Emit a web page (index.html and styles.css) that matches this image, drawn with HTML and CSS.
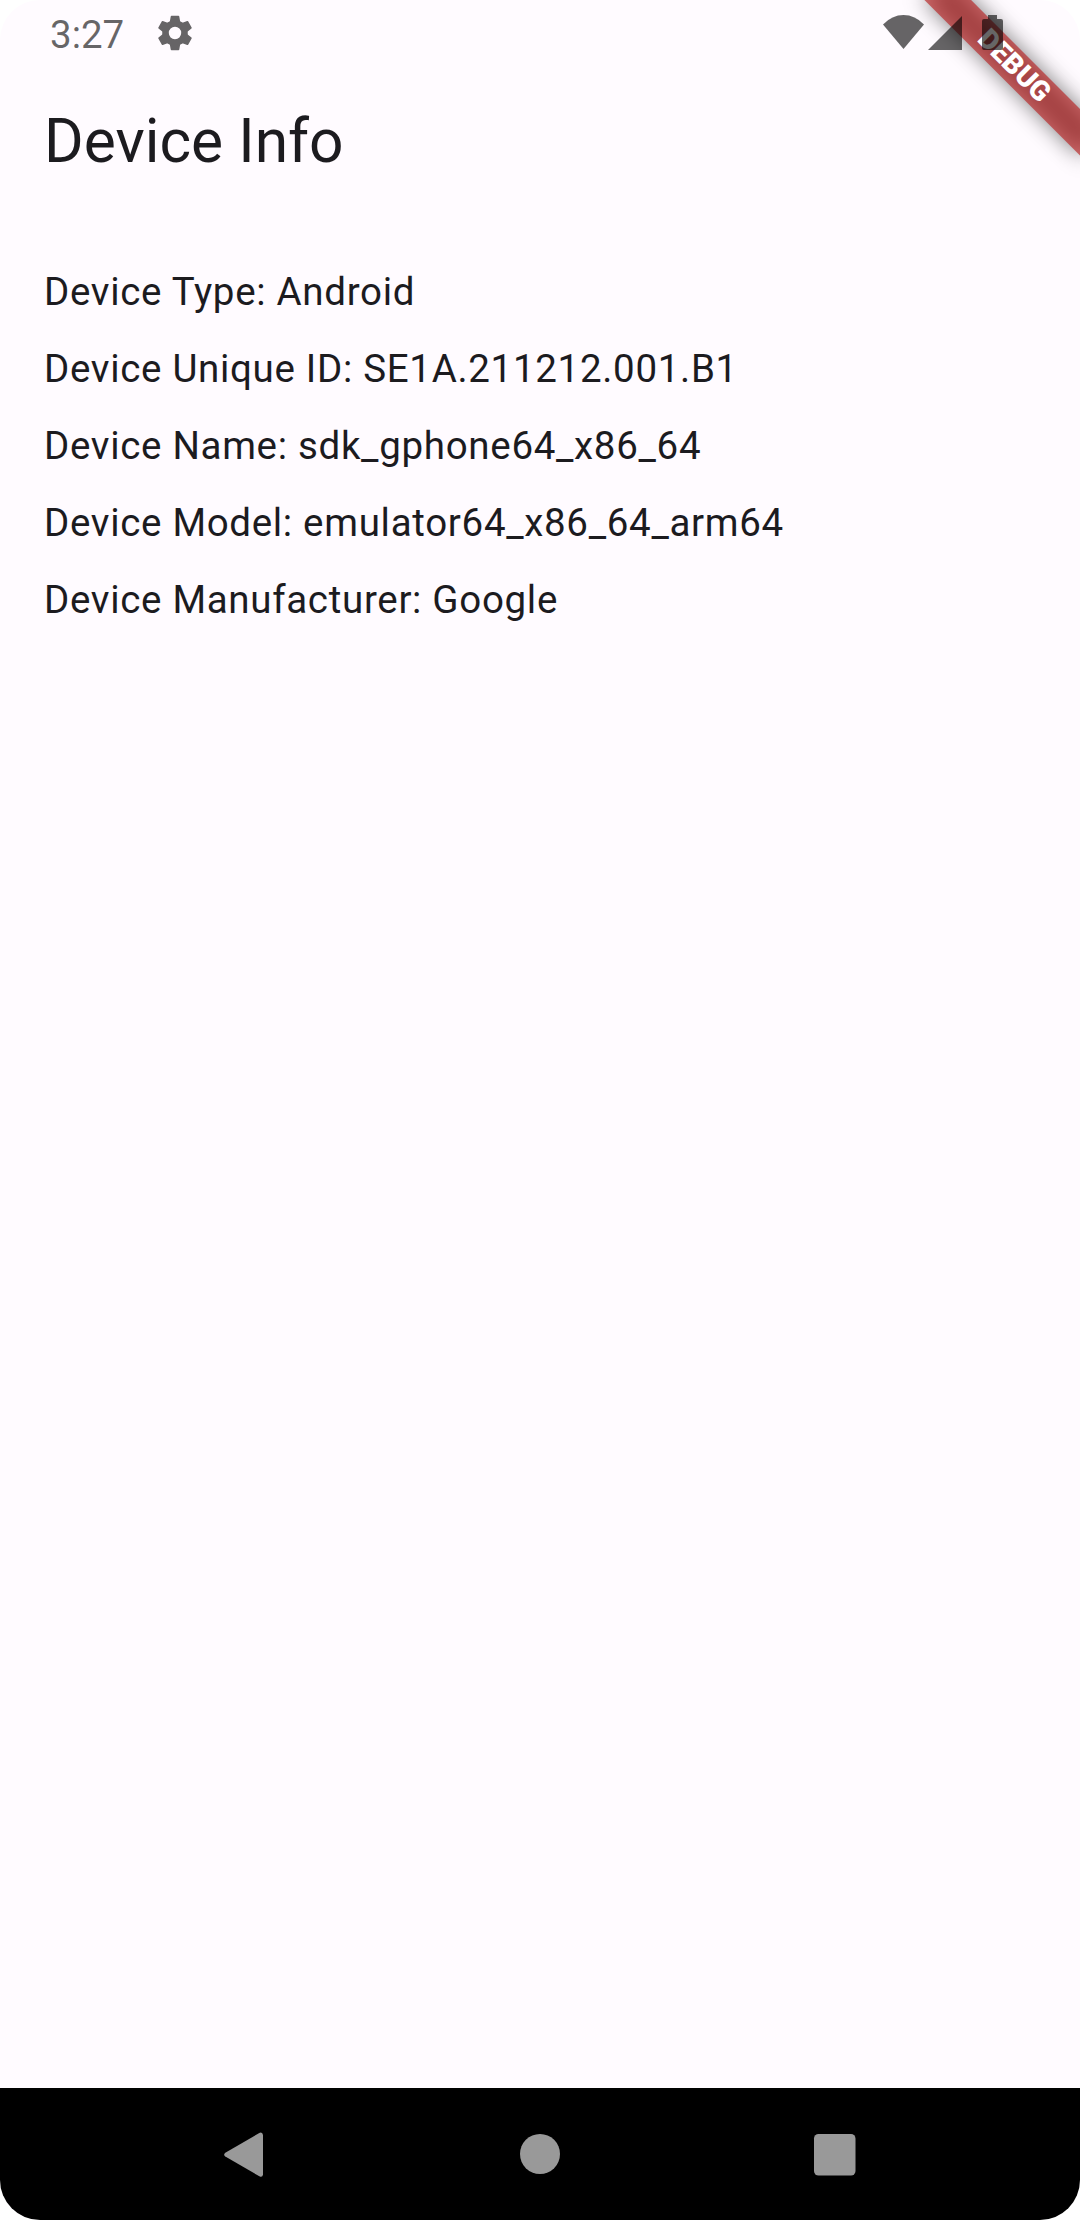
FILE: index.html
```html
<!DOCTYPE html>
<html lang="en">
<head>
<meta charset="utf-8">
<title>Device Info</title>
<link rel="stylesheet" href="styles.css">
</head>
<body>
<div class="screen">
  <div class="banner"><span class="banner-text">DEBUG</span></div>
  <div class="status-bar">
    <span class="clock">3:27</span>
    <svg class="gear" viewBox="-21 -21 42 42">
      <circle r="9.500" fill="none" stroke="#000" stroke-width="6.600"/>
      <g stroke="#000" stroke-width="1.600" stroke-linejoin="round">
        <path d="M-3.500-16.400H3.500L4.600-10L0-8.500L-4.600-10z"/>
        <path transform="rotate(60)" d="M-3.500-16.400H3.500L4.600-10L0-8.500L-4.600-10z"/>
        <path transform="rotate(120)" d="M-3.500-16.400H3.500L4.600-10L0-8.500L-4.600-10z"/>
        <path transform="rotate(180)" d="M-3.500-16.400H3.500L4.600-10L0-8.500L-4.600-10z"/>
        <path transform="rotate(240)" d="M-3.500-16.400H3.500L4.600-10L0-8.500L-4.600-10z"/>
        <path transform="rotate(300)" d="M-3.500-16.400H3.500L4.600-10L0-8.500L-4.600-10z"/>
      </g>
    </svg>
    <div class="indicators">
      <svg class="wifi" viewBox="0 0 41 34"><path d="M20.500 34L0 9.500Q9 0 20.500 0T41 9.500z"/></svg>
      <svg class="signal" viewBox="0 0 34 34"><path d="M34 0V34H0z"/></svg>
      <svg class="battery" viewBox="0 0 21 35"><path d="M6 0H15V4H19Q21 4 21 6V33Q21 35 19 35H2Q0 35 0 33V6Q0 4 2 4H6z"/></svg>
    </div>
  </div>
  <h1 class="title">Device Info</h1>
  <main class="details">
    <p>Device Type: Android</p>
    <p>Device Unique ID: SE1A.211212.001.B1</p>
    <p>Device Name: sdk_gphone64_x86_64</p>
    <p>Device Model: emulator64_x86_64_arm64</p>
    <p>Device Manufacturer: Google</p>
  </main>
  <nav class="nav-bar">
    <svg class="nav-icon" viewBox="0 0 48 48"><path d="M41 5V44.500Q40.500 47.500 37.800 46.500L3.300 26.500Q1 24.700 3.300 22.800L37.800 2.700Q40.500 1.700 41 5z"/></svg>
    <svg class="nav-icon" viewBox="0 0 48 48"><circle cx="24" cy="24" r="20"/></svg>
    <svg class="nav-icon" viewBox="0 0 48 48"><rect x="4" y="4" width="41.500" height="41.500" rx="4.500"/></svg>
  </nav>
</div>
</body>
</html>
```
FILE: styles.css
```css
* { box-sizing: border-box; }

body {
  margin: 0;
  background: #fff;
  font-family: Roboto, sans-serif;
  color: #1c1b1f;
}

.screen {
  position: relative;
  display: flex;
  flex-direction: column;
  width: 1080px;
  height: 2220px;
  overflow: hidden;
  border-radius: 40px;
  background: #fffbff;
}

.status-bar {
  position: relative;
  display: flex;
  align-items: flex-start;
  height: 66px;
  padding: 0 77px 0 50px;
  color: rgba(0, 0, 0, 0.6);
  fill: rgba(0, 0, 0, 0.6);
}

.clock {
  width: 103.500px;
  padding-top: 12px;
  font-size: 38.5px;
  line-height: 45px;
}

.gear {
  width: 42px;
  height: 42px;
  margin-top: 12px;
  fill: #000;
  opacity: 0.6;
}

.indicators {
  display: flex;
  margin: 15px 0 0 auto;
}

.wifi { width: 41px; height: 34px; margin-right: 4px; }
.signal { width: 34px; height: 34px; margin: 1px 20px 0 0; }
.battery { width: 21px; height: 35px; }

/* Corner ribbon, rotated about the top right corner of the screen */
.banner {
  position: absolute;
  top: 77px;
  left: 970px;
  width: 220px;
  height: 33px;
  transform-origin: 110px -77px;
  transform: rotate(45deg);
  text-align: center;
}

.banner::before,
.banner::after {
  content: "";
  position: absolute;
  inset: 0;
}

.banner::before {
  background: rgba(0, 0, 0, 0.5);
  filter: blur(10.900px);
}

.banner::after { background: rgba(183, 28, 28, 0.63); }

.banner-text {
  position: relative;
  z-index: 1;
  display: block;
  color: #fff;
  font-size: 28.050px;
  font-weight: 900;
  line-height: 31px;
}

.title {
  margin: 0;
  padding: 41px 44px 0;
  height: 154px;
  font-size: 60.500px;
  font-weight: 400;
  line-height: 70px;
}

.details {
  flex: 1;
  padding: 44px 44px 0;
}

.details p {
  margin: 0 0 22px;
  font-size: 38.500px;
  line-height: 55px;
  letter-spacing: 0.6875px;
}

.nav-bar {
  display: flex;
  justify-content: space-between;
  height: 132px;
  padding: 42px 222px 0 222px;
  background: #000;
  fill: #999;
}

.nav-icon {
  width: 48px;
  height: 48px;
}
```
